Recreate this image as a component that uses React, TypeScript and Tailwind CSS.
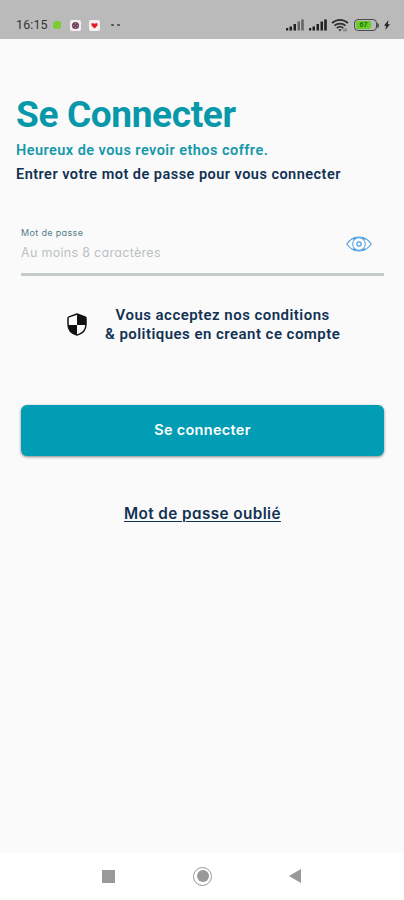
import type { ReactNode } from 'react'

function SignalIcon({ faded = false }: { faded?: boolean }) {
  return (
    <svg className="h-3 w-[18px]" viewBox="0 0 18 12" fill="#222222">
      <rect x="0" y="9" width="2.2" height="2.5" />
      <rect x="3.5" y="7.5" width="2.5" height="4" />
      <rect x="7.5" y="5" width="2.5" height="6.5" />
      <rect x="11.5" y="2.5" width="2.5" height="9" opacity={faded ? 0.55 : 1} />
      <rect x="15.2" y="0.5" width="2.6" height="11" opacity={faded ? 0.55 : 1} />
    </svg>
  )
}

function WifiIcon() {
  return (
    <svg className="h-[13px] w-[18px]" viewBox="0 0 18 13" fill="none" stroke="#303030">
      <path d="M1 4.2C5.5-.2 12.5-.2 17 4.2M3.5 6.700c3-2.700 8-2.700 11 0M5.800 9c1.800-1.500 4.600-1.500 6.400 0" strokeWidth="1.800" />
      <path d="M7.300 10.200h3.400L9 12.500z" fill="#303030" stroke="none" />
      <path d="M13 9.500v3M15 9.500v3" strokeWidth="1" opacity=".6" />
    </svg>
  )
}

function AppBadge({ children }: { children: ReactNode }) {
  return <div className="flex size-[11px] items-center justify-center rounded-[2px] bg-[#f5eff1]">{children}</div>
}

function StatusBar() {
  return (
    <div className="flex h-[39px] items-start justify-between bg-[#bababa] pr-[14px] pl-4">
      <div className="flex h-[50px] items-center">
        <span className="w-[37px] text-[12.5px] tracking-[0.1px] text-[#333333]">16:15</span>
        <span className="mr-[9px] size-2 rounded-[3px] bg-[#7dcc32]" />
        <AppBadge>
          <svg className="size-[9px]" viewBox="0 0 9 9">
            <circle cx="4.5" cy="4.5" r="3.6" fill="#70445f" />
            <path d="M4.5 2v5M2 4.5h5" stroke="#c4a8ba" strokeWidth=".7" />
            <circle cx="4.5" cy="4.5" r="1" fill="#50263f" />
          </svg>
        </AppBadge>
        <span className="w-2" />
        <AppBadge>
          <svg className="size-[7px]" viewBox="0 0 7 7" fill="#e51b22">
            <path d="M.5 1.2h2.2l.8.7.8-.7h2.200v2.200L3.500 6.500.5 3.400z" />
          </svg>
        </AppBadge>
        <span className="ml-[11px] flex gap-[3px]">
          <i className="h-[2px] w-[3px] rounded-full bg-[#505050]" />
          <i className="h-[2px] w-[3px] rounded-full bg-[#505050]" />
        </span>
      </div>
      <div className="flex h-[50px] items-center">
        <SignalIcon faded />
        <span className="w-[5px]" />
        <SignalIcon />
        <span className="w-[4px]" />
        <WifiIcon />
        <div className="ml-[5px] flex h-3 w-[23px] items-center rounded-[4px] border-[1.5px] border-[#4b4b4b] p-px">
          <div className="flex h-full w-[15px] items-center justify-center rounded-[2px] bg-[#65ce23] text-[7px] leading-none font-bold text-[#286816]">67</div>
        </div>
        <span className="h-[5px] w-[2px] rounded-r-sm bg-[#555555]" />
        <svg className="ml-[5px] h-[10px] w-[6px]" viewBox="0 0 6 10" fill="#222222">
          <path d="M4.500 0 0 5.800h2.200L1.300 10 6 4.200H3.700z" />
        </svg>
      </div>
    </div>
  )
}

function EyeIcon() {
  return (
    <svg className="h-4 w-[26px]" viewBox="0 0 26 16" fill="none" stroke="#4b9de0">
      <path d="M.8 8C4 3.200 8 1 13 1s9 2.200 12.200 7C22 12.800 18 15 13 15S4 12.800.8 8z" strokeWidth="1.100" />
      <circle cx="13" cy="8" r="6.300" strokeWidth="1" />
      <circle cx="13" cy="8" r="2.200" strokeWidth="1.200" />
      <path d="M7 3.200 10 1.800M16 1.800l3 1.400M7 12.800l3 1.400M16 14.200l3-1.400" strokeWidth="1.600" />
    </svg>
  )
}

function ShieldIcon() {
  return (
    <svg className="h-[23px] w-5" viewBox="0 0 20 23">
      <path d="M10 1 18 3.900q1 .4 1 1.600v5.700c0 5-3.400 9.200-9 10.900-5.600-1.700-9-5.900-9-10.900V5.500q0-1.200 1-1.600z" fill="#fafafa" stroke="#111111" strokeWidth="1.500" strokeLinejoin="round" />
      <path d="M10 1 18 3.900q1 .4 1 1.600V12h-9zM1 12h9v10C4.500 20.200 1 16.500 1 12z" fill="#111111" />
    </svg>
  )
}

function NavigationBar() {
  return (
    <div className="flex h-[47px] items-center bg-white pb-px pl-[102px]">
      <span className="size-[13px] bg-[#999999]" />
      <span className="ml-[78px] flex size-[19px] items-center justify-center rounded-full border-[1.5px] border-[#999999]">
        <span className="size-3 rounded-full bg-[#999999]" />
      </span>
      <svg className="ml-[77px] h-[14px] w-3" viewBox="0 0 12 14" fill="#999999">
        <path d="M12 0v14L0 7z" />
      </svg>
    </div>
  )
}

export default function App() {
  return (
    <div className="flex h-[900px] w-[404px] flex-col overflow-hidden bg-[#fafafa] font-['Roboto',sans-serif] text-[#123253]">
      <StatusBar />

      <main className="flex-1">
        <header className="px-4 pt-[54px]">
          <h1 className="h-[46px] text-[37px] leading-[44px] font-bold tracking-[-0.35px] whitespace-nowrap text-[#0798aa]">Se Connecter</h1>
          <p className="h-6 text-[14.5px] leading-6 font-semibold tracking-[0.45px] whitespace-nowrap text-[#1598aa]">Heureux de vous revoir ethos coffre.</p>
          <p className="h-6 text-[14.5px] leading-6 font-semibold tracking-[0.47px] whitespace-nowrap">Entrer votre mot de passe pour vous connecter</p>
        </header>

        {/* cv11 switches Inter to the single-storey a */}
        <div className="mr-5 ml-[21px] mt-[39px] flex h-[50px] justify-between border-b-[3px] border-[#c3caca] font-['Inter',sans-serif] [font-feature-settings:'cv11']">
          <label className="block whitespace-nowrap">
            <span className="block h-4 text-[9px] leading-[14px] tracking-[0.35px] text-[#527b88]">Mot de passe</span>
            <span className="block text-[12.5px] leading-[22px] tracking-[0.3px] text-[#bbc1c3]">Au moins 8 caractères</span>
          </label>
          <button className="mt-[10px] mr-3 h-4 w-[26px]" aria-label="Afficher le mot de passe">
            <EyeIcon />
          </button>
        </div>

        <div className="mt-[30px] flex items-center pl-[67px]">
          <ShieldIcon />
          <p className="ml-[18px] text-center text-[15px] leading-[18.5px] font-semibold tracking-[0.46px] whitespace-nowrap">
            Vous acceptez nos conditions
            <br />
            &amp; politiques en creant ce compte
          </p>
        </div>

        <div className="pt-[62px] pr-5 pl-[21px] font-['Inter',sans-serif] [font-feature-settings:'cv11']">
          <button className="flex h-[51px] w-full items-center justify-center rounded-[6px] bg-[#009db5] pb-0.5 text-[14.5px] font-semibold tracking-[0.3px] text-white shadow-[0_1px_3px_#0007]">
            Se connecter
          </button>
          <a href="#" className="mt-[46px] block text-center text-[15.3px] leading-6 font-semibold tracking-[0.4px] underline decoration-1 underline-offset-2">
            Mot de passe oublié
          </a>
        </div>
      </main>

      <NavigationBar />
    </div>
  )
}
